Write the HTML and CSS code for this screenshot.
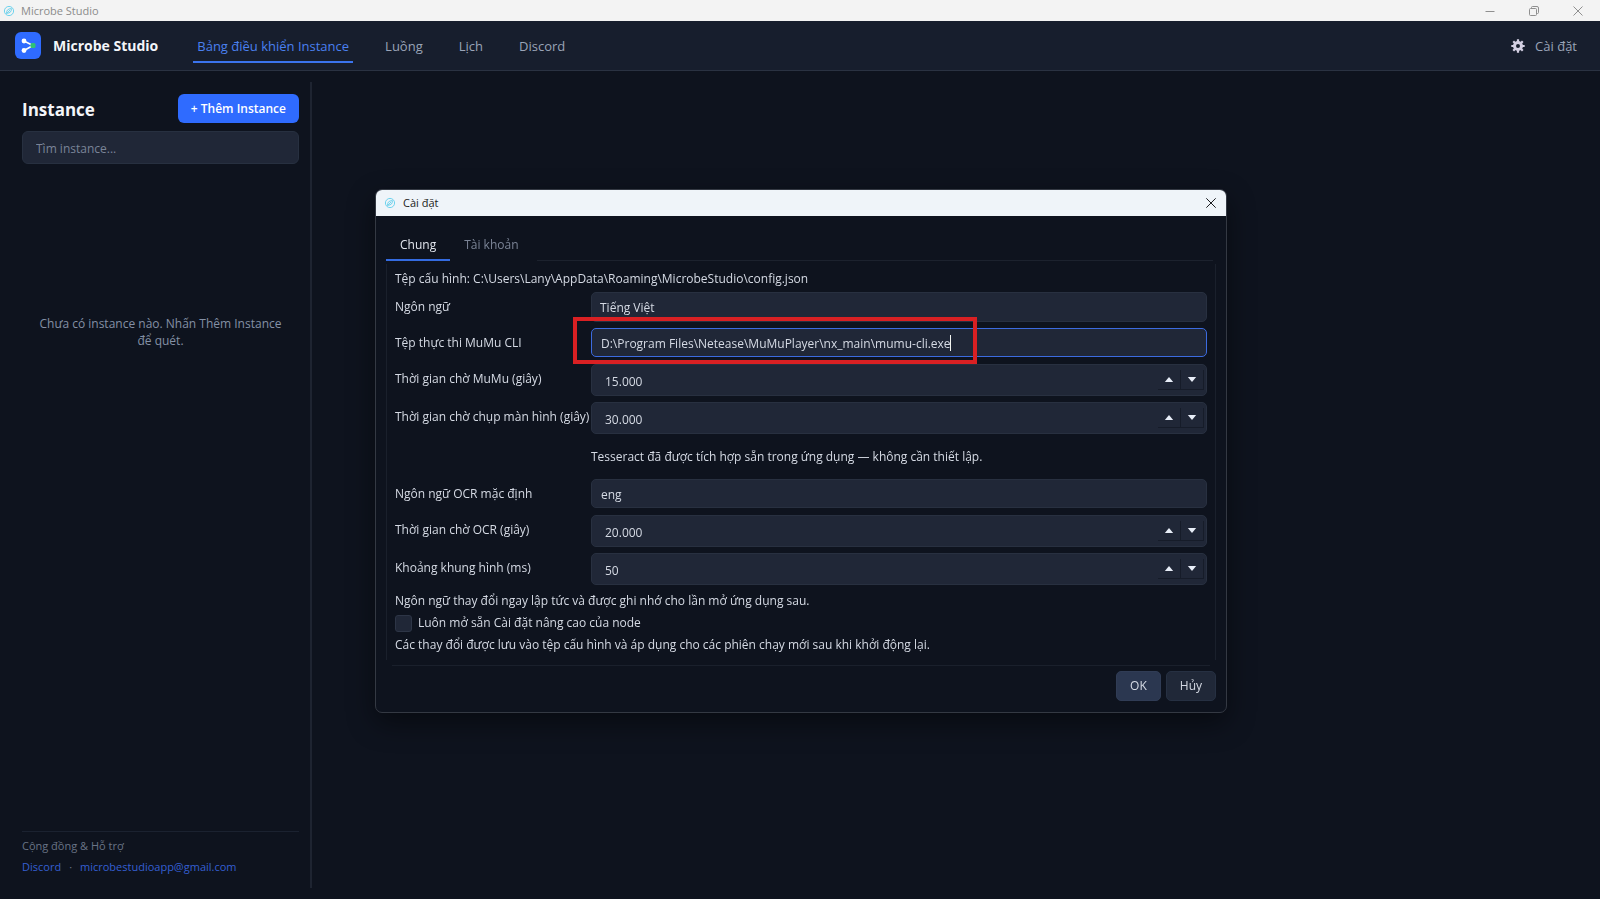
FILE: index.html
```html
<!DOCTYPE html>
<html lang="vi">
<head>
<meta charset="utf-8">
<title>Microbe Studio</title>
<link rel="stylesheet" href="styles.css">
</head>
<body>
<div class="titlebar">
  <svg class="app-icon" viewBox="0 0 12 12" aria-hidden="true"><circle cx="6" cy="6" r="4.6"/><path d="M3.6 8.2C3.4 5.4 5 3.6 8.4 3.6 8.6 6.6 7 8.4 3.6 8.2ZM3.4 8.8 7 5"/></svg>
  <span class="titlebar-text">Microbe Studio</span>
  <div class="window-controls">
    <button class="window-button" aria-label="Thu nhỏ"><svg viewBox="0 0 10 10"><path d="M0.5 5.5H9.5"/></svg></button>
    <button class="window-button" aria-label="Khôi phục"><svg viewBox="0 0 10 10"><rect x="0.5" y="2.5" width="7" height="7" rx="1"/><path d="M2.5 2.5V1.5Q2.5 .5 3.5 .5H8Q9.5 .5 9.5 2V6.5Q9.5 7.5 8.5 7.5H7.5"/></svg></button>
    <button class="window-button" aria-label="Đóng"><svg viewBox="0 0 10 10"><path d="M.5 .5 9.5 9.5M9.5 .5 .5 9.5"/></svg></button>
  </div>
</div>

<header class="header">
  <svg class="logo" viewBox="0 0 26 27" aria-hidden="true">
    <rect width="26" height="27" rx="6" fill="#2f6bff"/>
    <path d="M9 9 18 13.5 9 18.5" fill="none" stroke="#fff" stroke-width="1.6"/>
    <circle cx="9" cy="9" r="2.4" fill="#fff"/><circle cx="9" cy="18.5" r="2.4" fill="#fff"/>
    <rect x="15.5" y="11" width="5" height="5" rx="1.5" fill="#2fc274"/>
  </svg>
  <span class="brand">Microbe Studio</span>
  <nav class="nav">
    <a class="nav-link nav-link-active" href="#instance">Bảng điều khiển Instance</a>
    <a class="nav-link" href="#flow">Luồng</a>
    <a class="nav-link" href="#schedule">Lịch</a>
    <a class="nav-link" href="#discord">Discord</a>
  </nav>
  <button class="settings-button">
    <svg class="gear" viewBox="0 0 14 14" aria-hidden="true">
      <circle cx="7" cy="7" r="3.5" fill="none" stroke="#d3cfe2" stroke-width="3"/>
      <path d="M7 .3V3M7 11V13.7M.3 7H3M11 7H13.7M2.26 2.26 4.2 4.2M9.8 9.8 11.74 11.74M2.26 11.74 4.2 9.8M9.8 4.2 11.74 2.26" stroke="#d3cfe2" stroke-width="2.2"/>
    </svg>
    <span>Cài đặt</span>
  </button>
</header>

<main class="workspace">
  <aside class="sidebar">
    <div class="sidebar-head">
      <h1 class="sidebar-title">Instance</h1>
      <button class="add-button">+ Thêm Instance</button>
    </div>
    <input class="search" type="search" placeholder="Tìm instance..." aria-label="Tìm instance">
    <p class="empty">Chưa có instance nào. Nhấn Thêm Instance để quét.</p>
    <footer class="community">
      <div class="community-title">Cộng đồng &amp; Hỗ trợ</div>
      <div class="community-links"><a href="#discord-server">Discord</a><span>·</span><a href="mailto:microbestudioapp@gmail.com">microbestudioapp@gmail.com</a></div>
    </footer>
  </aside>
</main>

<div class="overlay">
  <section class="dialog" role="dialog" aria-labelledby="dialog-title">
    <div class="dialog-bar">
      <svg class="app-icon" viewBox="0 0 12 12" aria-hidden="true"><circle cx="6" cy="6" r="4.6"/><path d="M3.6 8.2C3.4 5.4 5 3.6 8.4 3.6 8.6 6.6 7 8.4 3.6 8.2ZM3.4 8.8 7 5"/></svg>
      <span id="dialog-title">Cài đặt</span>
      <button class="dialog-close" aria-label="Đóng"><svg viewBox="0 0 10 10"><path d="M.3 .3 9.7 9.7M9.7 .3 .3 9.7"/></svg></button>
    </div>
    <div class="dialog-body">
      <div class="tabs" role="tablist">
        <button class="tab tab-active" role="tab" aria-selected="true">Chung</button>
        <button class="tab" role="tab" aria-selected="false">Tài khoản</button>
        <span class="tabs-line"></span>
      </div>
      <form class="pane">
        <p class="note">Tệp cấu hình: C:\Users\Lany\AppData\Roaming\MicrobeStudio\config.json</p>
        <div class="fields">
          <label for="language">Ngôn ngữ</label>
          <select class="field field-select" id="language"><option>Tiếng Việt</option></select>

          <label for="cli">Tệp thực thi MuMu CLI</label>
          <div class="cli">
            <input class="field field-focused" id="cli" type="text" value="D:\Program Files\Netease\MuMuPlayer\nx_main\mumu-cli.exe">
            <span class="caret"></span>
            <span class="highlight"></span>
          </div>

          <label for="mumu-wait">Thời gian chờ MuMu (giây)</label>
          <div class="spin"><input id="mumu-wait" type="text" value="15.000"><button type="button" class="step" aria-label="Tăng"><svg viewBox="0 0 10 6"><path d="M0 6 5 0 10 6Z"/></svg></button><button type="button" class="step" aria-label="Giảm"><svg viewBox="0 0 10 6"><path d="M0 0 5 6 10 0Z"/></svg></button></div>

          <label for="shot-wait">Thời gian chờ chụp màn hình (giây)</label>
          <div class="spin"><input id="shot-wait" type="text" value="30.000"><button type="button" class="step" aria-label="Tăng"><svg viewBox="0 0 10 6"><path d="M0 6 5 0 10 6Z"/></svg></button><button type="button" class="step" aria-label="Giảm"><svg viewBox="0 0 10 6"><path d="M0 0 5 6 10 0Z"/></svg></button></div>

          <p class="ocr-note">Tesseract đã được tích hợp sẵn trong ứng dụng — không cần thiết lập.</p>

          <label for="ocr-lang">Ngôn ngữ OCR mặc định</label>
          <input class="field" id="ocr-lang" type="text" value="eng">

          <label for="ocr-wait">Thời gian chờ OCR (giây)</label>
          <div class="spin"><input id="ocr-wait" type="text" value="20.000"><button type="button" class="step" aria-label="Tăng"><svg viewBox="0 0 10 6"><path d="M0 6 5 0 10 6Z"/></svg></button><button type="button" class="step" aria-label="Giảm"><svg viewBox="0 0 10 6"><path d="M0 0 5 6 10 0Z"/></svg></button></div>

          <label for="frame-gap">Khoảng khung hình (ms)</label>
          <div class="spin"><input id="frame-gap" type="text" value="50"><button type="button" class="step" aria-label="Tăng"><svg viewBox="0 0 10 6"><path d="M0 6 5 0 10 6Z"/></svg></button><button type="button" class="step" aria-label="Giảm"><svg viewBox="0 0 10 6"><path d="M0 0 5 6 10 0Z"/></svg></button></div>
        </div>
        <p class="note">Ngôn ngữ thay đổi ngay lập tức và được ghi nhớ cho lần mở ứng dụng sau.</p>
        <label class="check"><input type="checkbox"><span>Luôn mở sẵn Cài đặt nâng cao của node</span></label>
        <p class="note">Các thay đổi được lưu vào tệp cấu hình và áp dụng cho các phiên chạy mới sau khi khởi động lại.</p>
      </form>
      <div class="actions">
        <button class="action action-primary">OK</button>
        <button class="action">Hủy</button>
      </div>
    </div>
  </section>
</div>
</body>
</html>
```
FILE: styles.css
```css
* { box-sizing: border-box; }

body {
  margin: 0;
  min-height: 100vh;
  display: flex;
  flex-direction: column;
  background: #0e131e;
  color: #d5dae4;
  font: 12px/18px "Open Sans", "Noto Sans", sans-serif;
}

button, input, select { font: inherit; color: inherit; margin: 0; }
button { border: 0; padding: 0; background: none; }
p, h1 { margin: 0; }
a { text-decoration: none; }
svg { display: block; }

.titlebar {
  display: flex;
  align-items: center;
  height: 21px;
  padding-left: 3px;
  background: #f3f3f3;
  color: #8b8b8b;
  font-size: 11px;
}
.app-icon {
  width: 12px;
  height: 12px;
  fill: none;
  stroke: #6fd3ee;
}
.titlebar-text { margin-left: 6px; }
.window-controls { display: flex; margin-left: auto; }
.window-button {
  width: 44px;
  height: 20px;
  display: grid;
  place-items: center;
}
.window-button svg {
  width: 10px;
  height: 10px;
  fill: none;
  stroke: #8f8f8f;
}

.header {
  display: flex;
  align-items: center;
  height: 50px;
  padding: 0 23px 0 15px;
  background: #171e2d;
  border-bottom: 1px solid #2a3242;
}
.logo { width: 26px; height: 27px; }
.brand {
  margin-left: 12px;
  color: #f3f5f9;
  font-size: 14px;
  font-weight: 700;
}
.nav {
  display: flex;
  gap: 28px;
  margin-left: 35px;
  font-size: 13px;
  font-weight: 500;
}
.nav-link {
  padding: 8px 4px 6px;
  color: #9aa4b8;
  border-bottom: 2px solid transparent;
}
.nav-link-active { color: #4a80f0; border-color: #3b74ee; }
.settings-button {
  display: flex;
  align-items: center;
  gap: 10px;
  margin-left: auto;
  color: #9aa4b8;
  font-size: 13px;
}
.gear { width: 14px; height: 14px; }

.workspace { flex: 1; display: flex; padding: 11px 0; }
.sidebar {
  width: 312px;
  display: flex;
  flex-direction: column;
  padding: 12px 11px 12px 22px;
  border-right: 2px solid #1e2431;
}
.sidebar-head {
  display: flex;
  align-items: center;
  justify-content: space-between;
}
.sidebar-title {
  padding-top: 2px;
  color: #f3f5f9;
  font-size: 17px;
  line-height: 27px;
  font-weight: 700;
}
.add-button {
  height: 29px;
  padding: 0 13px;
  border-radius: 6px;
  background: #2f6bff;
  color: #fff;
  font-weight: 600;
}
.search {
  appearance: none;
  width: 100%;
  height: 33px;
  margin-top: 8px;
  padding: 1px 13px 0;
  border: 1px solid #273040;
  border-radius: 6px;
  background: #202737;
}
.search::placeholder { color: #7a8497; }
.empty {
  padding: 151px 14px 0;
  color: #8490a5;
  line-height: 17px;
  text-align: center;
}
.community {
  margin-top: auto;
  padding-top: 5px;
  border-top: 1px solid #1b2230;
  color: #697386;
  font-size: 11px;
}
.community-links { display: flex; gap: 8px; margin-top: 3px; }
.community-links a { color: #355fd2; }

.overlay {
  position: fixed;
  inset: 0;
  display: grid;
  place-items: center;
  padding: 3px 0 0 2px;
}
.dialog {
  width: min(852px, 96vw);
  border: 1px solid #343943;
  border-radius: 7px;
  background: #0e131e;
  box-shadow: 0 10px 28px rgba(0, 0, 0, .45);
}
.dialog-bar {
  display: flex;
  align-items: center;
  height: 26px;
  padding: 0 10px 0 8px;
  border-radius: 6px 6px 0 0;
  background: #eff4f9;
  color: #1b1c20;
  font-size: 11px;
}
.dialog-bar .app-icon { margin-right: 7px; }
.dialog-close { margin-left: auto; }
.dialog-close svg {
  width: 10px;
  height: 10px;
  fill: none;
  stroke: #1b1c20;
}
.dialog-body { padding: 15px 10px 11px; }

.tabs { display: flex; align-items: flex-end; }
.tab {
  height: 30px;
  padding: 0 14px;
  border-bottom: 2px solid transparent;
  color: #7b8496;
}
.tab-active { border-color: #346be0; color: #e2e6ee; }
.tabs-line {
  flex: 1;
  height: 1px;
  margin: 0 3px 0 4px;
  background: #1c222e;
}

.pane {
  display: flex;
  flex-direction: column;
  gap: 4px;
  padding: 9px 9px 12px;
  background:
    linear-gradient(#1a202c, #1a202c) left 3px / 1px calc(100% - 9px) no-repeat,
    linear-gradient(#1a202c, #1a202c) right 3px / 1px calc(100% - 9px) no-repeat,
    linear-gradient(#1a202c, #1a202c) center bottom / calc(100% - 12px) 1px no-repeat;
}
.note { line-height: 18px; }
.fields {
  display: grid;
  grid-template-columns: 190px 1fr;
  gap: 6px;
  margin-bottom: 3px;
}
.fields label { line-height: 30px; white-space: nowrap; }
.field, .spin {
  width: 100%;
  border: 1px solid #283040;
  border-radius: 5px;
  background: #202737;
}
.field { display: block; height: 29px; padding: 2px 9px 0; }
.field-select { appearance: none; height: 30px; padding: 2px 8px 0; }
.field-focused { border-color: #3c6be0; outline: 0; }
.cli { position: relative; }
.caret {
  position: absolute;
  left: 359px;
  top: 7px;
  width: 1px;
  height: 16px;
  background: #f2f4f0;
}
.highlight {
  position: absolute;
  left: -18px;
  top: -11px;
  width: 404px;
  height: 47px;
  border: 4px solid #d92023;
  pointer-events: none;
}
.spin {
  display: flex;
  align-items: flex-start;
  height: 32px;
  padding: 5px 2px 0 13px;
}
.spin input {
  flex: 1;
  min-width: 0;
  height: 22px;
  padding: 0;
  border: 0;
  background: none;
}
.step {
  width: 23px;
  height: 20px;
  display: grid;
  place-items: center;
  border-right: 1px solid #161c29;
  border-bottom: 1px solid #161c29;
}
.step svg { width: 10px; height: 5px; fill: #e8eef8; }
.ocr-note { grid-column: 2; line-height: 33px; }

.check { display: flex; align-items: center; gap: 6px; }
.check input {
  appearance: none;
  width: 17px;
  height: 17px;
  border: 1px solid #2d3546;
  border-radius: 3px;
  background: #202737;
}

.actions {
  display: flex;
  justify-content: flex-end;
  gap: 5px;
  margin-top: 5px;
}
.action {
  height: 30px;
  padding: 0 13px;
  border: 1px solid #263042;
  border-radius: 5px;
  background: #202838;
}
.action-primary { background: #2b3750; border-color: #303c55; }
```
